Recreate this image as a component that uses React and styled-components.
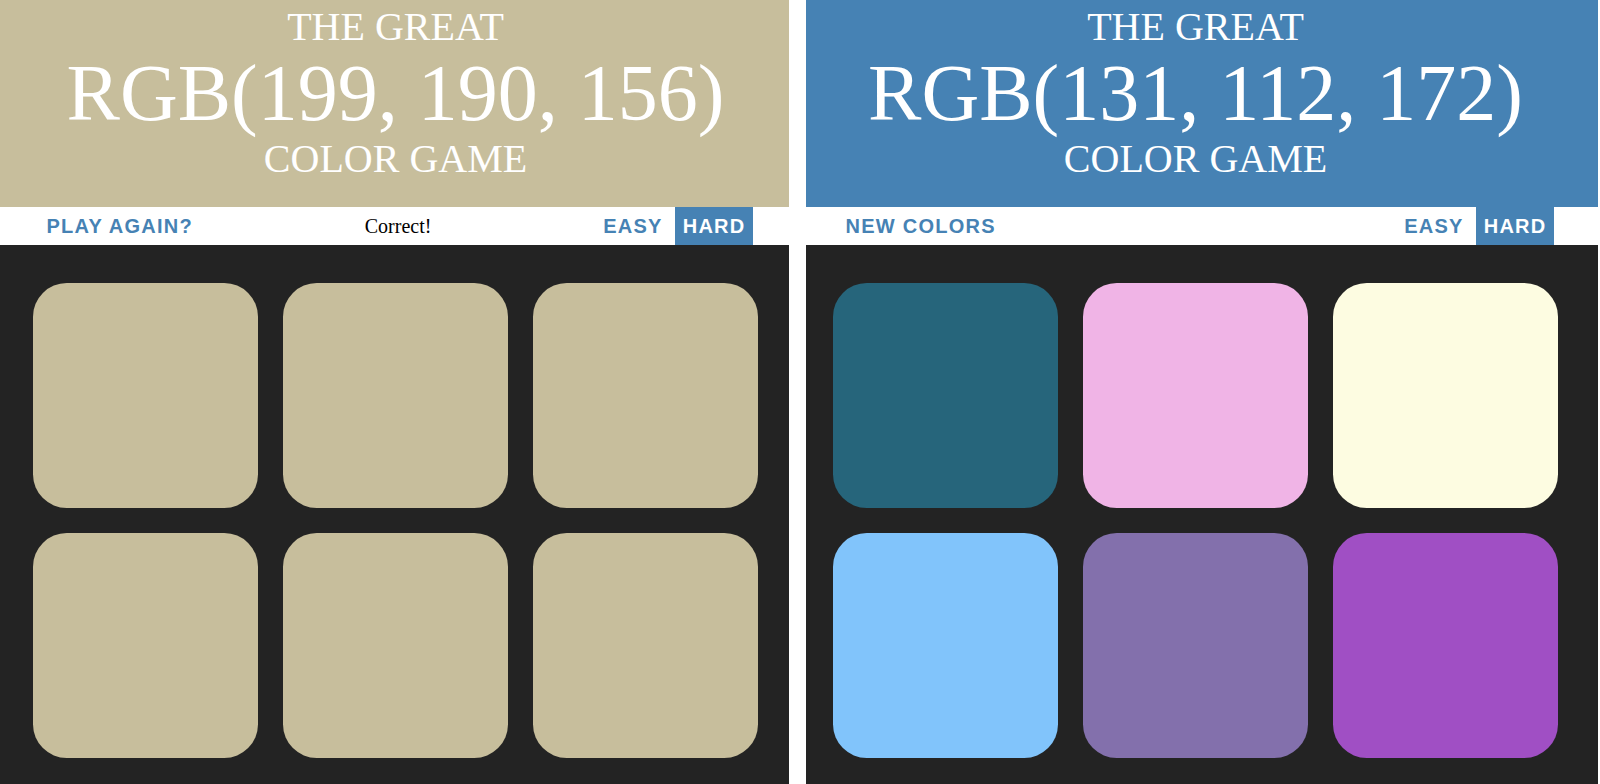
import React from 'react';
import styled, { createGlobalStyle } from 'styled-components';

const GlobalStyle = createGlobalStyle`
  html, body {
    margin: 0;
    padding: 0;
    background: #ffffff;
  }
  body {
    font-family: 'Liberation Serif', 'Times New Roman', serif;
  }
`;

const Page = styled.div`
  display: flex;
  gap: 17px;
  height: 100vh;
  overflow: hidden;
`;

const Game = styled.section`
  width: ${(p) => p.$width}px;
  flex: none;
  display: flex;
  flex-direction: column;
  background: #232323;
`;

const Title = styled.h1`
  margin: 0;
  padding: 5px ${(p) => p.$right}px 26px ${(p) => p.$left}px;
  background: ${(p) => p.$color};
  color: #ffffff;
  text-align: center;
  font-family: 'Liberation Serif', 'Times New Roman', serif;
  font-weight: normal;
  font-size: 40px;
  line-height: 1.1;
  text-transform: uppercase;

  .big {
    display: block;
    font-size: 80px;
  }
  .line {
    display: block;
  }
`;

const Stripe = styled.div`
  height: 38px;
  display: flex;
  align-items: stretch;
  justify-content: space-between;
  background: #ffffff;
  padding: 0 ${(p) => p.$right}px 0 ${(p) => p.$left}px;
`;

const Button = styled.button`
  border: none;
  outline: none;
  margin: 0;
  padding: 0 7.5px;
  height: 100%;
  background: ${(p) => (p.$selected ? '#4682b4' : 'none')};
  color: ${(p) => (p.$selected ? '#ffffff' : '#4682b4')};
  font-family: 'Liberation Sans', Arial, sans-serif;
  font-weight: 700;
  font-size: 20px;
  letter-spacing: 1.25px;
  text-transform: uppercase;
  cursor: pointer;
`;

const Message = styled.span`
  display: flex;
  align-items: center;
  font-family: 'Liberation Serif', 'Times New Roman', serif;
  font-size: 20px;
  color: #000000;
`;

const Modes = styled.div`
  display: flex;
  gap: 5px;
`;

const Board = styled.div`
  flex: 1;
  padding: 0 ${(p) => p.$right}px 0 ${(p) => p.$left}px;
`;

const Container = styled.div`
  max-width: 750px;
  margin: 25px auto 0;
  padding: 12.5px;
  box-sizing: border-box;
  display: grid;
  grid-template-columns: repeat(3, 225px);
  gap: 25px;
`;

const Square = styled.div`
  width: 225px;
  height: 225px;
  border-radius: 15%;
  background: ${(p) => p.$color};
`;

const games = [
  {
    width: 789,
    header: 'rgb(199, 190, 156)',
    title: 'RGB(199, 190, 156)',
    action: 'Play Again?',
    message: 'Correct!',
    stripe: { left: 39, right: 36 },
    inset: { left: 2, right: 0 },
    squares: [
      'rgb(199, 190, 156)',
      'rgb(199, 190, 156)',
      'rgb(199, 190, 156)',
      'rgb(199, 190, 156)',
      'rgb(199, 190, 156)',
      'rgb(199, 190, 156)',
    ],
  },
  {
    width: 792,
    header: '#4682b4',
    title: 'RGB(131, 112, 172)',
    action: 'New Colors',
    message: '',
    stripe: { left: 32, right: 44 },
    inset: { left: 0, right: 13 },
    squares: [
      'rgb(38, 101, 123)',
      'rgb(240, 180, 230)',
      'rgb(253, 252, 225)',
      'rgb(129, 196, 251)',
      'rgb(131, 112, 172)',
      'rgb(160, 79, 196)',
    ],
  },
];

export default function App() {
  return (
    <>
      <GlobalStyle />
      <Page>
        {games.map((game, index) => (
          <Game key={`game-${index}`} $width={game.width}>
            <Title
              $color={game.header}
              $left={game.inset.left}
              $right={game.inset.right}
            >
              <span className="line">The Great</span>
              <span className="big">{game.title}</span>
              <span className="line">Color Game</span>
            </Title>
            <Stripe $left={game.stripe.left} $right={game.stripe.right}>
              <Button>{game.action}</Button>
              <Message>{game.message}</Message>
              <Modes>
                <Button>Easy</Button>
                <Button $selected>Hard</Button>
              </Modes>
            </Stripe>
            <Board $left={game.inset.left} $right={game.inset.right}>
              <Container>
                {game.squares.map((color, i) => (
                  <Square key={`square-${i}`} $color={color} />
                ))}
              </Container>
            </Board>
          </Game>
        ))}
      </Page>
    </>
  );
}
